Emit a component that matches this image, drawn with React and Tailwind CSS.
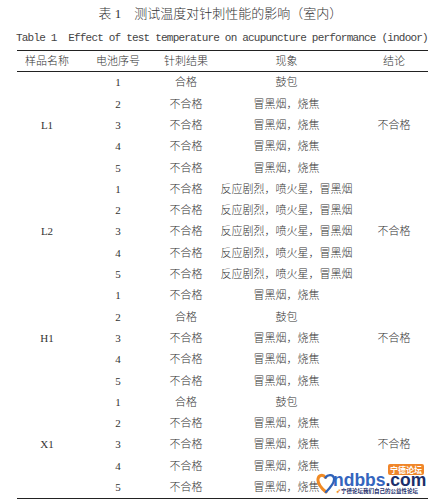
const groups = [
  {
    name: "L1",
    rows: [
      ["1", "合格", "鼓包"],
      ["2", "不合格", "冒黑烟，烧焦"],
      ["3", "不合格", "冒黑烟，烧焦"],
      ["4", "不合格", "冒黑烟，烧焦"],
      ["5", "不合格", "冒黑烟，烧焦"],
    ],
  },
  {
    name: "L2",
    rows: [
      ["1", "不合格", "反应剧烈，喷火星，冒黑烟"],
      ["2", "不合格", "反应剧烈，喷火星，冒黑烟"],
      ["3", "不合格", "反应剧烈，喷火星，冒黑烟"],
      ["4", "不合格", "反应剧烈，喷火星，冒黑烟"],
      ["5", "不合格", "反应剧烈，喷火星，冒黑烟"],
    ],
  },
  {
    name: "H1",
    rows: [
      ["1", "不合格", "冒黑烟，烧焦"],
      ["2", "合格", "鼓包"],
      ["3", "不合格", "冒黑烟，烧焦"],
      ["4", "不合格", "冒黑烟，烧焦"],
      ["5", "不合格", "冒黑烟，烧焦"],
    ],
  },
  {
    name: "X1",
    rows: [
      ["1", "合格", "鼓包"],
      ["2", "不合格", "冒黑烟，烧焦"],
      ["3", "不合格", "冒黑烟，烧焦"],
      ["4", "不合格", "冒黑烟，烧焦"],
      ["5", "不合格", "冒黑烟，烧焦"],
    ],
  },
];

const Watermark = () => (
  <div className="absolute left-[316px] top-[463px] w-[112px] h-[32px]">
    <div className="absolute left-[72px] top-[1px] w-[36px] h-[11px] rounded-[2px] bg-[#f0862a] text-white text-[8px] leading-[11px] font-bold text-center font-['Noto_Sans_CJK_SC',sans-serif]">
      宁德论坛
    </div>
    <svg className="absolute left-0 top-[9px]" width="20" height="22" viewBox="0 0 20 22">
      <path
        d="M10 20 C4 15 1.5 11 2 7 C2.5 3 7 2 9.5 5.5"
        fill="none"
        stroke="#f08a24"
        strokeWidth="3"
        strokeLinecap="round"
      />
      <path
        d="M9.5 5.5 C12 2 17 2.5 18 6 C19 10 15 15 10 20"
        fill="none"
        stroke="#2f62b8"
        strokeWidth="2.4"
        strokeLinecap="round"
      />
    </svg>
    <div className="absolute left-[17px] top-[8px] text-[17.5px] leading-[18px] font-bold whitespace-nowrap font-['Liberation_Sans',Arial,sans-serif]">
      <span className="text-[#3465be]">ndbbs</span>
      <span className="text-[#1c2f6b]">.com</span>
    </div>
    <div className="absolute left-[20px] top-[25px] text-[5.5px] leading-[6px] font-bold text-[#1c2f6b] whitespace-nowrap font-['Noto_Sans_CJK_SC',sans-serif]">
      <span className="text-[#f08a24]">➶</span>宁德论坛我们自己的公益性论坛
    </div>
  </div>
);

const cols = "grid grid-cols-[82px_54px_147px] h-[21.3px] items-center text-center";

export default function App() {
  return (
    <div className="relative w-[441px] h-[504px] bg-white overflow-hidden text-[#333] font-light font-['Liberation_Serif','Noto_Sans_CJK_SC',serif]">
      <div className="pt-[5px] text-center text-[13px] leading-[18px] whitespace-pre">
        {"表 1　测试温度对针刺性能的影响（室内）"}
      </div>
      <div className="mt-[8px] pl-[16px] text-[11px] tracking-[-0.8px] leading-[14px] whitespace-pre text-[#444] font-['Liberation_Mono','Courier_New',monospace]">
        {"Table 1  Effect of test temperature on acupuncture performance (indoor)"}
      </div>

      <div className="mt-[5px] ml-[17px] w-[411px] border-t-[1.5px] border-b-[1.5px] border-[#222] text-[11px]">
        <div className="grid grid-cols-[60px_82px_54px_147px_68px] h-[21px] border-b border-[#222] items-center text-center">
          <div>样品名称</div>
          <div>电池序号</div>
          <div>针刺结果</div>
          <div>现象</div>
          <div>结论</div>
        </div>
        {groups.map((g) => (
          <div key={g.name} className="flex">
            <div className="w-[60px] flex items-center justify-center">{g.name}</div>
            <div className="flex flex-col">
              {g.rows.map((r, i) => (
                <div key={i} className={cols}>
                  <div>{r[0]}</div>
                  <div>{r[1]}</div>
                  <div>{r[2]}</div>
                </div>
              ))}
            </div>
            <div className="w-[68px] flex items-center justify-center">不合格</div>
          </div>
        ))}
      </div>

      <Watermark />
    </div>
  );
}
